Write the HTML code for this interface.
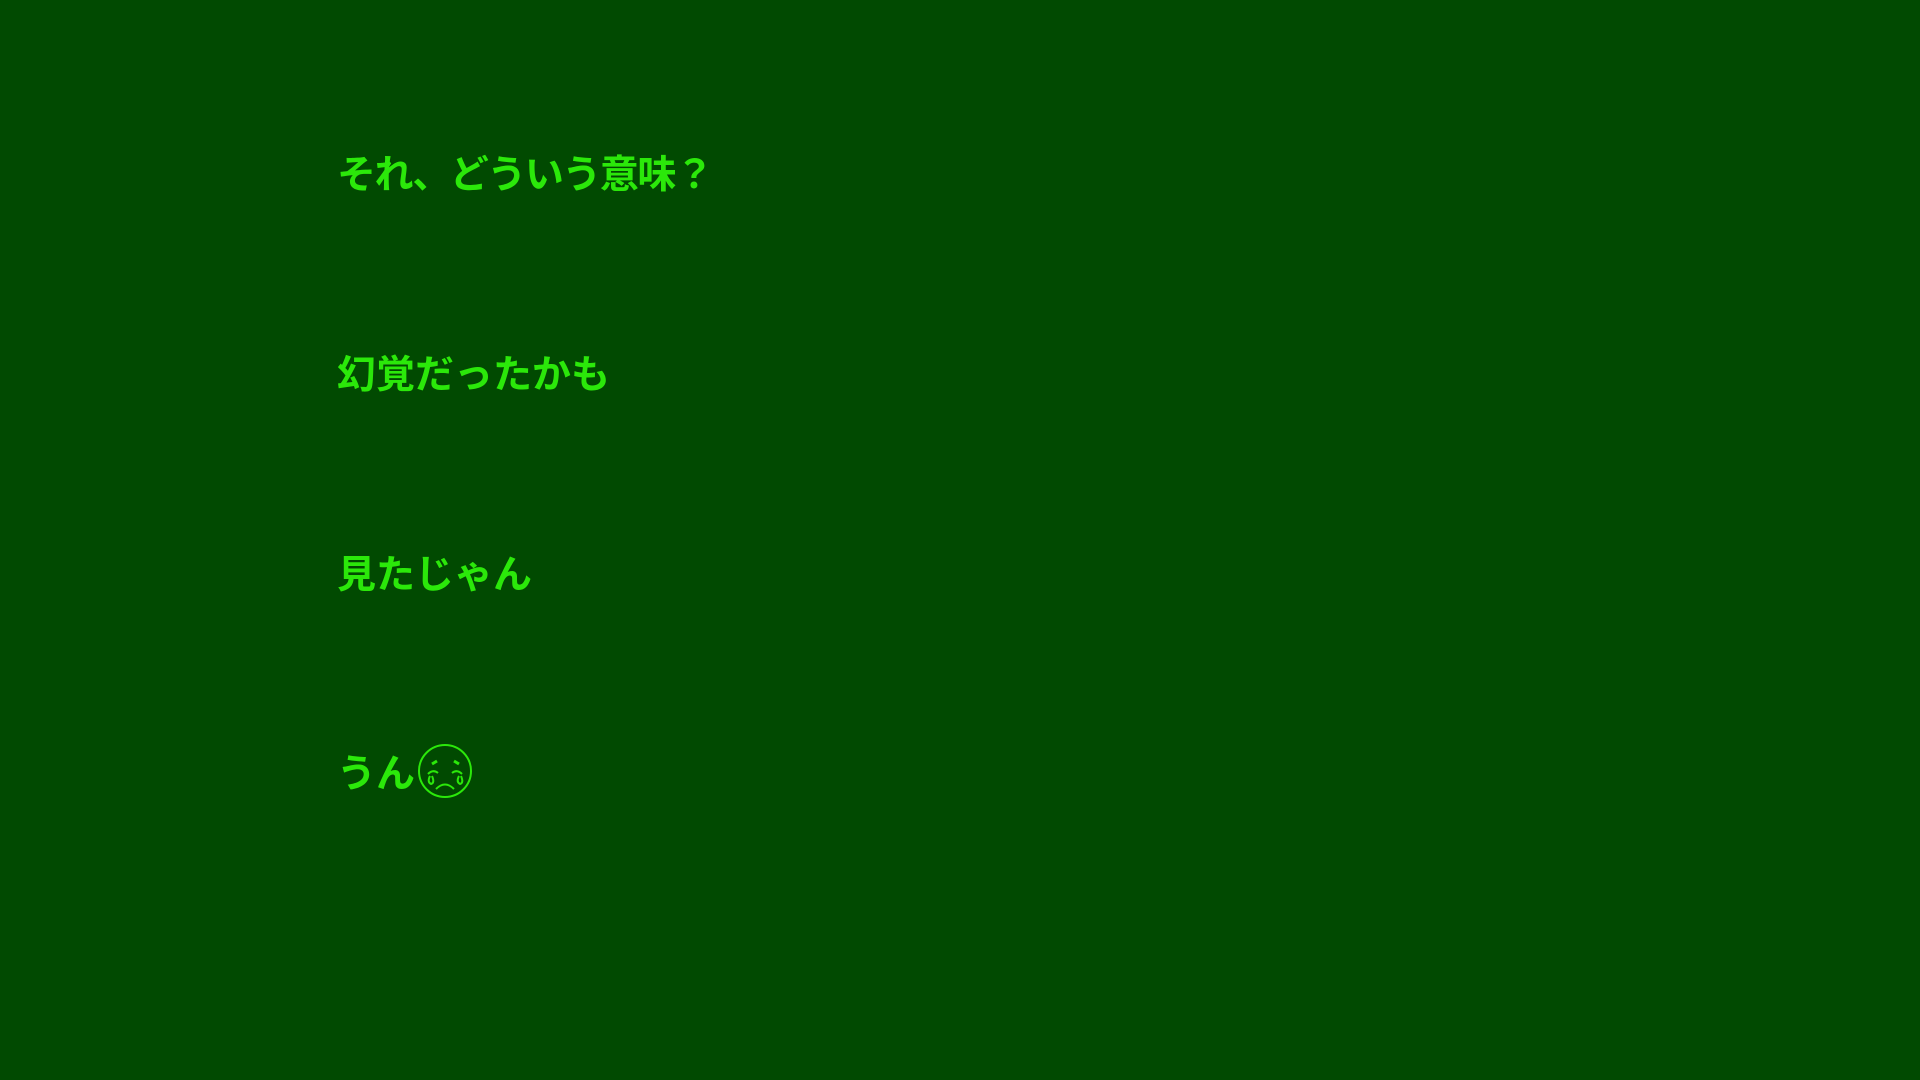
<!DOCTYPE html>
<html><head><meta charset="utf-8"><style>
html,body{margin:0;padding:0;width:1920px;height:1080px;background:#014a01;overflow:hidden}
.t{position:absolute;left:337px;font-family:"Liberation Sans","Noto Sans CJK JP",sans-serif;font-size:39px;line-height:39px;color:#2be80a;white-space:nowrap;font-weight:bold}
</style></head><body>
<div class="t" style="top:156px;letter-spacing:-1.5px">それ、どういう意味？</div>
<div class="t" style="top:356px">幻覚だったかも</div>
<div class="t" style="top:556px">見たじゃん</div>
<div class="t" style="top:755px">うん</div>
<svg style="position:absolute;left:416px;top:742px" width="58" height="58" viewBox="0 0 58 58" fill="none" stroke="#2be80a" stroke-width="2">
<circle cx="29" cy="29" r="26"/>
<path d="M16 22 l5 -3 M38 19 l5 3" stroke-width="3"/>
<path d="M12 32 q5 -5 10 -1 M36 31 q5 -4 10 1"/>
<path d="M14 34 q-3 6 1 8 q4 -1 1 -8 M43 34 q-3 6 1 8 q4 -1 1 -8"/>
<path d="M20 47 q9 -9 18 0"/>
</svg>
</body></html>
